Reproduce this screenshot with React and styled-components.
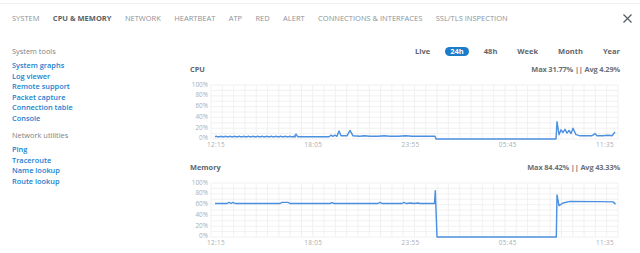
import React from "react";
import styled, { createGlobalStyle } from "styled-components";

const GlobalStyle = createGlobalStyle`
  body {
    margin: 0;
    background: #fff;
    font-family: "Open Sans", "Liberation Sans", sans-serif;
  }
`;

const PLOT_W = 407;
const PLOT_H = 54;
const PLOT_X0 = 213;

const Page = styled.div`
  width: 640px;
  height: 250px;
  overflow: hidden;
  border-top: 1px solid #eef0f2;
  margin-top: 3px;
  box-sizing: border-box;
`;

const TabBar = styled.div`
  display: flex;
  align-items: center;
  height: 28px;
  padding: 0 12px;
  gap: 13.4px;
`;

const Tab = styled.div`
  font-size: 7.5px;
  line-height: 10px;
  color: ${(p) => (p.$active ? "#5b626a" : "#8c939b")};
  font-weight: ${(p) => (p.$active ? 700 : 400)};
  white-space: nowrap;
`;

const Close = styled.div`
  margin-left: auto;
  margin-right: -4px;
  display: flex;
`;

const Body = styled.div`
  display: flex;
  padding-top: 14px;
`;

const Sidebar = styled.div`
  width: 168px;
  padding-left: 12px;
  display: flex;
  flex-direction: column;
`;

const SectionTitle = styled.div`
  font-size: 7.4px;
  line-height: 10px;
  color: #7a7f85;
  margin-top: ${(p) => p.$top || 0}px;
`;

const LinkList = styled.div`
  display: flex;
  flex-direction: column;
  margin-top: 4px;
`;

const NavLink = styled.a`
  font-size: 7.4px;
  line-height: 10.5px;
  font-weight: 600;
  color: #2180d0;
  text-decoration: none;
`;

const Main = styled.div`
  flex: 1;
  padding: 0 20px 0 12px;
  display: flex;
  flex-direction: column;
`;

const RangeRow = styled.div`
  display: flex;
  justify-content: flex-end;
  gap: 9px;
  height: 10px;
  align-items: center;
  margin-right: -5.5px;
`;

const RangeButton = styled.div`
  font-size: 7.5px;
  line-height: 9px;
  height: 9px;
  padding: 0 5.5px;
  border-radius: 5px;
  font-weight: 700;
  color: ${(p) => (p.$active ? "#fff" : "#5f666e")};
  background: ${(p) => (p.$active ? "#1c7cc9" : "transparent")};
`;

const ChartBlock = styled.div`
  display: flex;
  flex-direction: column;
  margin-top: ${(p) => p.$top}px;
`;

const ChartHeader = styled.div`
  display: flex;
  justify-content: space-between;
  line-height: 12px;
  font-size: 7.4px;
  font-weight: 700;
  color: #5f666e;
`;

const Stats = styled.span`
  color: #6a7078;
  letter-spacing: -0.15px;
`;

const PlotRow = styled.div`
  display: flex;
  gap: 3px;
  margin-top: 9.5px;
`;

const YAxis = styled.div`
  width: 18px;
  height: ${PLOT_H + 8}px;
  margin: -4px 0;
  display: flex;
  flex-direction: column;
  justify-content: space-between;
  align-items: flex-end;
`;

const AxisLabel = styled.span`
  font-size: 6.4px;
  line-height: 8px;
  color: #a9aeb3;
  white-space: nowrap;
`;

const XAxis = styled.div`
  display: flex;
  justify-content: space-between;
  width: 419px;
  margin: 2.5px 0 0 11px;
`;

const XLabel = styled(AxisLabel)`
  width: 30px;
  text-align: center;
  letter-spacing: 0.3px;
`;

function toPath(points) {
  return points
    .map(([x, v], i) => `${i ? "L" : "M"}${(x - PLOT_X0).toFixed(1)} ${(PLOT_H - (v / 100) * PLOT_H).toFixed(1)}`)
    .join(" ");
}

function Plot({ points }) {
  const rows = [];
  for (let i = 0; i <= 10; i++) rows.push(i * (PLOT_H / 10));
  const cols = [];
  for (let i = 0; i <= 36; i++) cols.push(i * (PLOT_W / 36));
  return (
    <svg width={PLOT_W} height={PLOT_H} viewBox={`0 0 ${PLOT_W} ${PLOT_H}`} style={{ display: "block", overflow: "visible" }}>
      {rows.map((y) => (
        <line key={"r" + y} x1="0" x2={PLOT_W} y1={y} y2={y} stroke="#ededed" strokeWidth="0.8" />
      ))}
      {cols.map((x) => (
        <line key={"c" + x} x1={x} x2={x} y1="0" y2={PLOT_H} stroke="#ededed" strokeWidth="0.8" />
      ))}
      <path d={toPath(points)} fill="none" stroke="#4b8fe0" strokeWidth="1.4" strokeLinejoin="round" />
    </svg>
  );
}

function Chart({ title, stats, points, top }) {
  return (
    <ChartBlock $top={top}>
      <ChartHeader>
        <span>{title}</span>
        <Stats>{stats}</Stats>
      </ChartHeader>
      <PlotRow>
        <YAxis>
          {["100%", "80%", "60%", "40%", "20%", "0%"].map((l) => (
            <AxisLabel key={l}>{l}</AxisLabel>
          ))}
        </YAxis>
        <Plot points={points} />
      </PlotRow>
      <XAxis>
        {["12:15", "18:05", "23:55", "05:45", "11:35"].map((l) => (
          <XLabel key={l}>{l}</XLabel>
        ))}
      </XAxis>
    </ChartBlock>
  );
}

// CPU series
const cpu = (() => {
  const p = [];
  for (let x = 217; x < 296; x += 4.6) {
    p.push([x, 4]);
    p.push([x + 1.2, 5.2]);
    p.push([x + 2.4, 4]);
  }
  p.push([296, 4], [298, 9], [300, 4], [331, 4], [333, 7], [335, 5], [337, 7], [339, 5],
    [341, 15], [343, 6], [349, 6], [352, 16], [355, 6], [362, 5], [366, 6], [372, 5],
    [380, 5], [386, 6], [392, 5], [400, 5], [408, 6], [414, 5], [437, 5], [438, 0],
    [558, 0], [559, 32], [561, 8], [563, 17], [565, 12], [567, 18], [569, 11], [571, 16],
    [573, 10], [575, 20], [578, 8], [582, 6], [590, 6], [594, 6], [597, 10], [599, 6],
    [605, 6], [610, 7], [614, 6], [617, 13]);
  return p;
})();

// Memory series
const mem = [
  [217, 62], [229, 62], [231, 64], [233, 62], [235, 64], [237, 62], [282, 62], [284, 64],
  [290, 64], [292, 62], [332, 62], [334, 63.5], [336, 62], [380, 62], [382, 64], [384, 62],
  [404, 62], [406, 64], [408, 62], [413, 63], [416, 62], [420, 63], [422, 62], [436.5, 62],
  [437.3, 86], [439, 0], [558.3, 0], [559, 78], [561, 58], [565, 63], [572, 66],
  [600, 65.5], [615, 65], [617.5, 61],
];

function CloseIcon() {
  return (
    <svg width="9" height="9" viewBox="0 0 9 9">
      <path d="M0.5 0.5 L8.5 8.5 M8.5 0.5 L0.5 8.5" stroke="#555b62" strokeWidth="1.2" />
    </svg>
  );
}

export default function App() {
  const tabs = ["SYSTEM", "CPU & MEMORY", "NETWORK", "HEARTBEAT", "ATP", "RED", "ALERT", "CONNECTIONS & INTERFACES", "SSL/TLS INSPECTION"];
  return (
    <>
      <GlobalStyle />
      <Page>
        <TabBar>
          {tabs.map((t) => (
            <Tab key={t} $active={t === "CPU & MEMORY"}>{t}</Tab>
          ))}
          <Close><CloseIcon /></Close>
        </TabBar>
        <Body>
          <Sidebar>
            <SectionTitle>System tools</SectionTitle>
            <LinkList>
              {["System graphs", "Log viewer", "Remote support", "Packet capture", "Connection table", "Console"].map((l) => (
                <NavLink key={l} href="#">{l}</NavLink>
              ))}
            </LinkList>
            <SectionTitle $top={7}>Network utilities</SectionTitle>
            <LinkList>
              {["Ping", "Traceroute", "Name lookup", "Route lookup"].map((l) => (
                <NavLink key={l} href="#">{l}</NavLink>
              ))}
            </LinkList>
          </Sidebar>
          <Main>
            <RangeRow>
              {["Live", "24h", "48h", "Week", "Month", "Year"].map((r) => (
                <RangeButton key={r} $active={r === "24h"}>{r}</RangeButton>
              ))}
            </RangeRow>
            <Chart title="CPU" stats="Max 31.77% || Avg 4.29%" points={cpu} top={7} />
            <Chart title="Memory" stats="Max 84.42% || Avg 43.33%" points={mem} top={12} />
          </Main>
        </Body>
      </Page>
    </>
  );
}
